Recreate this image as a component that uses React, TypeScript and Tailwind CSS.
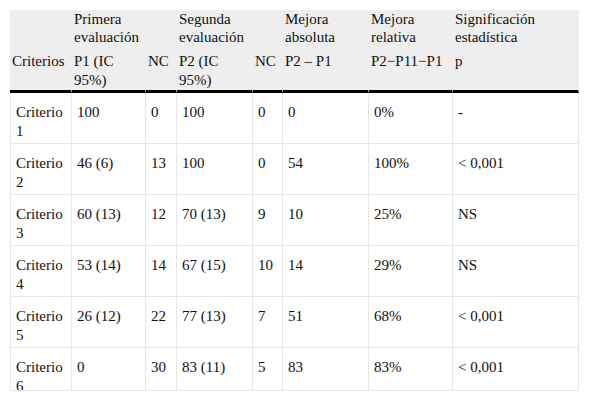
import React from "react";

const widths = [62, 74, 31, 76, 30, 86, 84, 126];

const rows: string[][] = [
  ["Criterio 1", "100", "0", "100", "0", "0", "0%", "-"],
  ["Criterio 2", "46 (6)", "13", "100", "0", "54", "100%", "< 0,001"],
  ["Criterio 3", "60 (13)", "12", "70 (13)", "9", "10", "25%", "NS"],
  ["Criterio 4", "53 (14)", "14", "67 (15)", "10", "14", "29%", "NS"],
  ["Criterio 5", "26 (12)", "22", "77 (13)", "7", "51", "68%", "< 0,001"],
  ["Criterio 6", "0", "30", "83 (11)", "5", "83", "83%", "< 0,001"],
];

const head1 = ["", "Primera evaluación", "", "Segunda evaluación", "", "Mejora absoluta", "Mejora relativa", "Significación estadística"];
const head2 = ["Criterios", "P1 (IC 95%)", "NC", "P2 (IC 95%)", "NC", "P2 – P1", "P2−P11−P1", "p"];

export default function App() {
  return (
    <div className="bg-white w-[590px] h-[401px] pt-[10px] pl-[10px] font-['Liberation_Serif','Times_New_Roman',serif]">
      <div className="w-[569px] h-[381px] overflow-hidden border-b border-[#e6e6e6]">
        <table className="table-fixed border-separate border-spacing-0 text-[15px] leading-[19px] text-[#111] font-['Liberation_Serif','Times_New_Roman',serif]">
          <colgroup>
            {widths.map((w, i) => (
              <col key={i} style={{ width: w }} />
            ))}
          </colgroup>
          <thead>
            <tr className="bg-[#eeeeee]">
              {head1.map((h, i) => (
                <th key={i} className="font-normal text-left align-top px-[2px] pt-0 pb-0 leading-[18px]">
                  {h}
                </th>
              ))}
            </tr>
            <tr className="bg-[#eeeeee]">
              {head2.map((h, i) => (
                <th
                  key={i}
                  className="font-normal text-left align-top px-[2px] pt-[6px] pb-0 leading-[19px] border-b-[3px] border-b-black border-r border-r-[#eeeeee]"
                >
                  {h}
                </th>
              ))}
            </tr>
          </thead>
          <tbody>
            {rows.map((r, ri) => (
              <tr key={ri}>
                {r.map((c, ci) => (
                  <td
                    key={ci}
                    className={
                      "align-top px-[5px] pt-[10px] pb-[2px] h-[51px] border-b border-r border-[#e6e6e6] " +
                      (ci === 0 ? "border-l" : "")
                    }
                  >
                    {c}
                  </td>
                ))}
              </tr>
            ))}
          </tbody>
        </table>
      </div>
    </div>
  );
}
